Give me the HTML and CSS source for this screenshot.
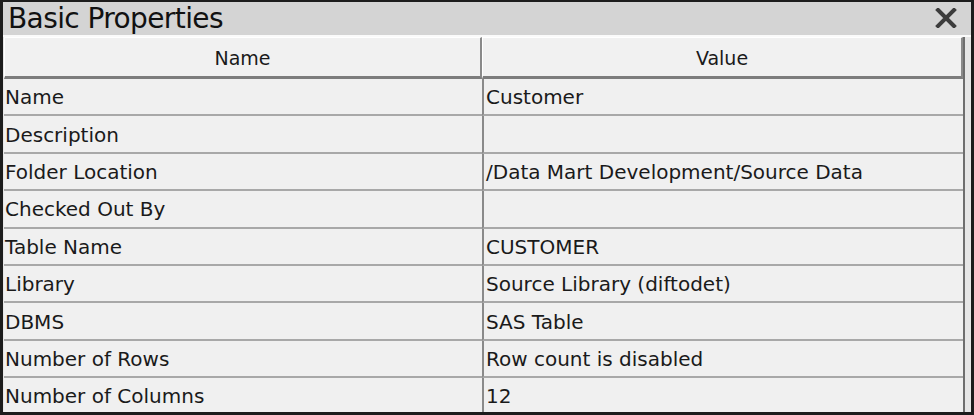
FILE: index.html
```html
<!DOCTYPE html>
<html>
<head>
<meta charset="utf-8">
<link rel="stylesheet" href="styles.css">
</head>
<body>
<div class="panel">
  <div class="titlebar">
    <span class="title">Basic Properties</span>
    <svg class="close" width="22" height="20" viewBox="0 0 22 20"><path d="M3 2 L19 18 M19 2 L3 18" stroke="#3c3c3c" stroke-width="4" stroke-linecap="square"/></svg>
  </div>
  <div class="grid">
    <div class="hcell">Name</div>
    <div class="hcell">Value</div>
    <div class="cell">Name</div><div class="cell v">Customer</div>
    <div class="cell">Description</div><div class="cell v"></div>
    <div class="cell">Folder Location</div><div class="cell v">/Data Mart Development/Source Data</div>
    <div class="cell">Checked Out By</div><div class="cell v"></div>
    <div class="cell">Table Name</div><div class="cell v">CUSTOMER</div>
    <div class="cell">Library</div><div class="cell v">Source Library (diftodet)</div>
    <div class="cell">DBMS</div><div class="cell v">SAS Table</div>
    <div class="cell">Number of Rows</div><div class="cell v">Row count is disabled</div>
    <div class="cell">Number of Columns</div><div class="cell v">12</div>
  </div>
</div>
</body>
</html>
```
FILE: styles.css
```css
html, body { margin: 0; padding: 0; background: #ffffff; }
.panel {
  box-sizing: border-box;
  width: 974px;
  height: 415px;
  border-style: solid;
  border-color: #1c1c1c;
  border-width: 2px 3px 3px 3px;
  background: #e6e6e6;
  display: flex;
  flex-direction: column;
  overflow: hidden;
  font-family: "DejaVu Sans", sans-serif;
  color: #1a1a1a;
}
.titlebar {
  height: 33px;
  background: #d4d4d4;
  display: flex;
  align-items: center;
  justify-content: space-between;
  padding: 0 14px 0 5px;
  border-bottom: 2px solid #fafafa;
  flex: none;
}
.title { font-size: 28px; line-height: 33px; letter-spacing: -0.6px; color: #111; }
.close { display: block; margin-top: -2px; }
.grid {
  flex: none;
  margin-left: 1px;
  width: 959px;
  display: grid;
  grid-template-columns: 478px 481px;
  grid-template-rows: 42px repeat(9, 37.4px);
  background: #f0f0f0;
  border-right: 2px solid #6e6e6e;
}
.hcell {
  background: #f1f1f1;
  border-left: 1px solid #ffffff;
  border-top: 1px solid #ffffff;
  border-bottom: 3px solid #7d7d7d;
  border-right: 2px solid #8a8a8a;
  display: flex;
  align-items: center;
  justify-content: center;
  font-size: 19px;
  padding-top: 1px;
}
.cell {
  border-bottom: 2px solid #a8a8a8;
  display: flex;
  align-items: center;
  padding-left: 1px;
  padding-top: 1px;
  font-size: 20px;
  letter-spacing: 0;
  white-space: nowrap;
}
.cell.v { border-left: 2px solid #8a8a8a; padding-left: 2px; }
```
